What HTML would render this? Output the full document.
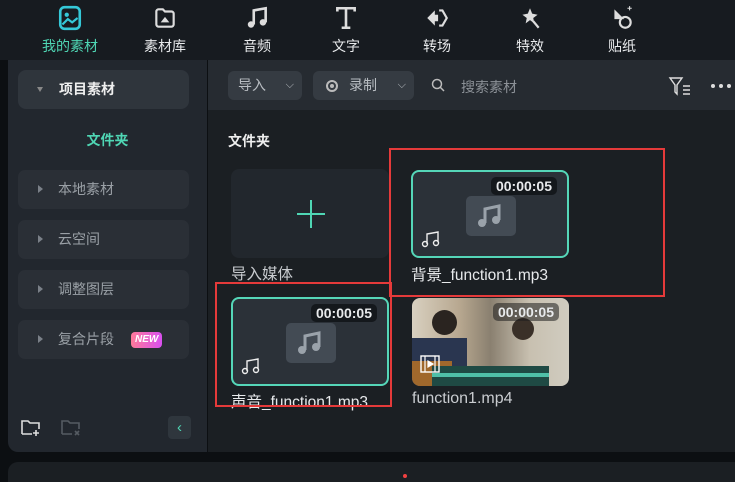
<!DOCTYPE html><html><head><meta charset="utf-8"><style>
*{margin:0;padding:0;box-sizing:border-box}
body{width:735px;height:482px;overflow:hidden;background:#0c0f12;font-family:"Liberation Sans","Noto Sans CJK SC",sans-serif;position:relative;color:#fff}
.a{position:absolute}
.top{left:0;top:0;width:735px;height:60px;background:#171b20}
.tab{position:absolute;top:0;width:80px;text-align:center;font-size:14px;color:#e8eaec}
.tab svg{display:block;margin:5px auto 0}
.tab span{display:block;margin-top:5px}
.left{left:8px;top:60px;width:199px;height:392px;background:#22272e;border-bottom-left-radius:10px}
.item{position:absolute;left:10px;width:171px;height:39px;background:#2a2f36;border-radius:7px;font-size:14px;color:#9aa0a6;line-height:39px;padding-left:40px}
.item:before{content:"";position:absolute;left:20px;top:15px;border-left:5px solid #7a8088;border-top:4px solid transparent;border-bottom:4px solid transparent}
.main{left:208px;top:60px;width:527px;height:392px;background:#1b1f23}
.tb{left:208px;top:60px;width:527px;height:50px;background:#262b31}
.btn{position:absolute;top:71px;height:29px;background:#353b42;border-radius:6px;font-size:14px;color:#b8bdc2;line-height:29px}
.card{position:absolute;border-radius:8px;overflow:hidden}
.aud{background:#2b3138;border:2px solid #55d6b8}
.dur{position:absolute;right:10px;top:5px;background:#14181c;border-radius:5px;font-size:14px;font-weight:bold;padding:1px 5px;color:#e8eaec}
.lbl{position:absolute;font-size:15.5px;color:#c9ccd0}
.red{position:absolute;border:2px solid #e53a3a}
</style></head><body>
<div class="a top"></div>
<div class="tab" style="left:30px;color:#4fd6b4"><svg width="26" height="26" viewBox="0 0 24 24"><rect x="3" y="2" width="18" height="20" rx="4" fill="none" stroke="#35c8d8" stroke-width="2.4"/><circle cx="9" cy="9" r="2" fill="#35c8d8"/><path d="M5 18l5-5 4 3 5-4" stroke="#35c8d8" stroke-width="2" fill="none"/></svg><span>我的素材</span></div>
<div class="tab" style="left:125px"><svg width="26" height="26" viewBox="0 0 24 24"><path d="M4 6a2 2 0 0 1 2-2h4l2 2h6a2 2 0 0 1 2 2v10a2 2 0 0 1-2 2H6a2 2 0 0 1-2-2z" fill="none" stroke="#ddd" stroke-width="2"/><path d="M8 16h8l-4-5z" fill="#ddd"/></svg><span>素材库</span></div>
<div class="tab" style="left:217px"><svg width="26" height="26" viewBox="0 0 24 24"><path d="M9 18V5l11-2v13" stroke="#ddd" stroke-width="2.4" fill="none"/><circle cx="6.5" cy="18" r="3" fill="#ddd"/><circle cx="17.5" cy="16" r="3" fill="#ddd"/></svg><span>音频</span></div>
<div class="tab" style="left:306px"><svg width="26" height="26" viewBox="0 0 24 24"><path d="M4 6V3h16v3M12 3v18M8 21h8" stroke="#ddd" stroke-width="2.4" fill="none"/></svg><span>文字</span></div>
<div class="tab" style="left:397px"><svg width="26" height="26" viewBox="0 0 24 24"><path d="M10 5L3 12l7 7v-4h3V9h-3z" fill="#ddd"/><path d="M14 5h3l4 7-4 7h-3" stroke="#ddd" stroke-width="2" fill="none"/></svg><span>转场</span></div>
<div class="tab" style="left:490px"><svg width="26" height="26" viewBox="0 0 24 24"><path d="M12 3l2 5 5 1-4 3 1 5-4-3-4 3 1-5-4-3 5-1z" fill="#ddd"/><path d="M15 15l5 6" stroke="#ddd" stroke-width="2"/></svg><span>特效</span></div>
<div class="tab" style="left:582px"><svg width="26" height="26" viewBox="0 0 24 24"><path d="M5 4l9 9H5z" fill="#ddd"/><circle cx="15" cy="16" r="5" fill="none" stroke="#ddd" stroke-width="2"/><path d="M19 1v4M17 3h4" stroke="#ddd" stroke-width="1"/></svg><span>贴纸</span></div>

<div class="a left"></div>
<div class="a" style="left:18px;top:70px;width:171px;height:39px;background:#2f353c;border-radius:8px;font-size:14px;font-weight:bold;line-height:39px;padding-left:41px;color:#eee">项目素材<div class="a" style="left:19px;top:17px;border-top:5px solid #888;border-left:3.5px solid transparent;border-right:3.5px solid transparent"></div></div>
<div class="a" style="left:8px;top:130px;width:199px;text-align:center;font-size:14px;font-weight:bold;color:#4fd6b4">文件夹</div>
<div class="a" style="left:8px;top:0">
<div class="item" style="top:170px">本地素材</div>
<div class="item" style="top:220px">云空间</div>
<div class="item" style="top:270px">调整图层</div>
<div class="item" style="top:320px">复合片段<span style="position:absolute;left:113px;top:12px;height:16px;line-height:16px;padding:0 4px;font-size:10px;font-weight:bold;font-style:italic;color:#fff;border-radius:4px;background:linear-gradient(90deg,#ff7a9a,#d84ff0)">NEW</span></div>
</div>
<svg class="a" style="left:21px;top:419px" width="20" height="18" viewBox="0 0 20 18"><path d="M1 15V2h6l2 2h9v6M1 15h10M15 11v6M12 14h6" stroke="#ddd" stroke-width="1.6" fill="none"/></svg>
<svg class="a" style="left:61px;top:419px" width="20" height="18" viewBox="0 0 20 18"><path d="M1 15V2h6l2 2h9v6M1 15h10M14 12l4 4M18 12l-4 4" stroke="#555b62" stroke-width="1.6" fill="none"/></svg>
<div class="a" style="left:168px;top:416px;width:23px;height:23px;background:#2f363d;border-radius:4px;color:#4fd6b4;font-size:15px;text-align:center;line-height:23px">‹</div>

<div class="a main"></div>
<div class="a tb"></div>
<div class="btn" style="left:228px;width:74px;padding-left:10px">导入<span style="position:absolute;right:8px;font-size:11px">⌵</span></div>
<div class="btn" style="left:313px;width:101px;padding-left:36px"><span style="position:absolute;left:13px;top:9px;width:12px;height:12px;border:2px solid #bbb;border-radius:50%"><span style="position:absolute;left:2px;top:2px;width:4px;height:4px;background:#bbb;border-radius:50%"></span></span>录制<span style="position:absolute;right:8px;font-size:11px">⌵</span></div>
<svg class="a" style="left:431px;top:78px" width="14" height="14"><circle cx="6" cy="6" r="4.5" stroke="#bbb" stroke-width="1.5" fill="none"/><path d="M9.5 9.5l3.5 3.5" stroke="#bbb" stroke-width="1.5"/></svg>
<div class="a" style="left:461px;top:77px;font-size:14px;color:#8c9197">搜索素材</div>
<svg class="a" style="left:668px;top:76px" width="26" height="20"><path d="M2 2h12l-5 7v9l-2-2V9z" stroke="#ddd" stroke-width="1.4" fill="none"/><path d="M15 10h7M15 14h7M15 18h7" stroke="#ddd" stroke-width="1.4"/></svg>
<div class="a" style="left:710px;top:84px;width:25px;height:4px"><span class="a" style="left:1px;top:0;width:4px;height:4px;border-radius:50%;background:#ddd"></span><span class="a" style="left:9px;top:0;width:4px;height:4px;border-radius:50%;background:#ddd"></span><span class="a" style="left:17px;top:0;width:4px;height:4px;border-radius:50%;background:#ddd"></span></div>

<div class="a" style="left:228px;top:131px;font-size:14px;font-weight:bold;color:#eee">文件夹</div>
<div class="card" style="left:231px;top:169px;width:158px;height:89px;background:#22272d"><div class="a" style="left:66px;top:44px;width:28px;height:2px;background:#4fd6b4"></div><div class="a" style="left:79px;top:31px;width:2px;height:28px;background:#4fd6b4"></div></div>
<div class="lbl" style="left:231px;top:262px">导入媒体</div>

<div class="card aud" style="left:411px;top:170px;width:158px;height:88px"><div class="dur">00:00:05</div><div class="a" style="left:53px;top:24px;width:50px;height:40px;background:#434b54;border-radius:5px"><svg width="50" height="40"><path d="M19 27V13l14-3v14" stroke="#9aa2aa" stroke-width="3" fill="none"/><circle cx="16" cy="27" r="4" fill="#9aa2aa"/><circle cx="30" cy="24" r="4" fill="#9aa2aa"/></svg></div><svg class="a" style="left:8px;top:56px" width="20" height="20"><path d="M6 16V6l11-2v10" stroke="#eee" stroke-width="1.4" fill="none"/><circle cx="4" cy="16" r="2.5" stroke="#eee" stroke-width="1.4" fill="none"/><circle cx="15" cy="15" r="2.5" stroke="#eee" stroke-width="1.4" fill="none"/></svg></div>
<div class="lbl" style="left:411px;top:263px;color:#e8eaec">背景_function1.mp3</div>

<div class="card aud" style="left:231px;top:297px;width:158px;height:89px"><div class="dur">00:00:05</div><div class="a" style="left:53px;top:24px;width:50px;height:40px;background:#434b54;border-radius:5px"><svg width="50" height="40"><path d="M19 27V13l14-3v14" stroke="#9aa2aa" stroke-width="3" fill="none"/><circle cx="16" cy="27" r="4" fill="#9aa2aa"/><circle cx="30" cy="24" r="4" fill="#9aa2aa"/></svg></div><svg class="a" style="left:8px;top:56px" width="20" height="20"><path d="M6 16V6l11-2v10" stroke="#eee" stroke-width="1.4" fill="none"/><circle cx="4" cy="16" r="2.5" stroke="#eee" stroke-width="1.4" fill="none"/><circle cx="15" cy="15" r="2.5" stroke="#eee" stroke-width="1.4" fill="none"/></svg></div>
<div class="lbl" style="left:231px;top:390px;color:#e8eaec">声音_function1.mp3</div>

<div class="card" style="left:412px;top:298px;width:157px;height:88px;background:linear-gradient(90deg,#d8d0c0 0%,#b8a890 30%,#8a8070 50%,#c8c0b0 75%,#d0ccc0 100%)">
<div class="a" style="left:0;top:40px;width:55px;height:48px;background:#2a3650"></div>
<div class="a" style="left:20px;top:12px;width:25px;height:25px;border-radius:50%;background:#2a2420"></div>
<div class="a" style="left:100px;top:20px;width:22px;height:22px;border-radius:50%;background:#3a3028"></div>
<div class="a" style="left:0;top:63px;width:40px;height:25px;background:#a0682c"></div>
<div class="a" style="left:20px;top:68px;width:117px;height:20px;background:#1f4a44"><div class="a" style="left:0;top:7px;width:117px;height:4px;background:#4fc0a8"></div></div>
<div class="dur" style="background:rgba(30,30,30,.55)">00:00:05</div>
<svg class="a" style="left:8px;top:56px" width="20" height="20"><rect x="1" y="2" width="18" height="16" stroke="#fff" stroke-width="1.4" fill="none"/><path d="M5 2v16M15 2v16M8 7l5 3-5 3z" stroke="#fff" stroke-width="1.2" fill="#fff"/></svg>
</div>
<div class="lbl" style="left:412px;top:390px;font-size:16px">function1.mp4</div>

<div class="red" style="left:389px;top:148px;width:276px;height:149px"></div>
<div class="red" style="left:215px;top:282px;width:177px;height:125px"></div>

<div class="a" style="left:0;top:452px;width:735px;height:10px;background:#0c0f12"></div>
<div class="a" style="left:8px;top:462px;width:727px;height:20px;background:#1b1f23;border-top-left-radius:10px"></div>
<div class="a" style="left:403px;top:474px;width:4px;height:4px;border-radius:50%;background:#f04040"></div>
</body></html>
